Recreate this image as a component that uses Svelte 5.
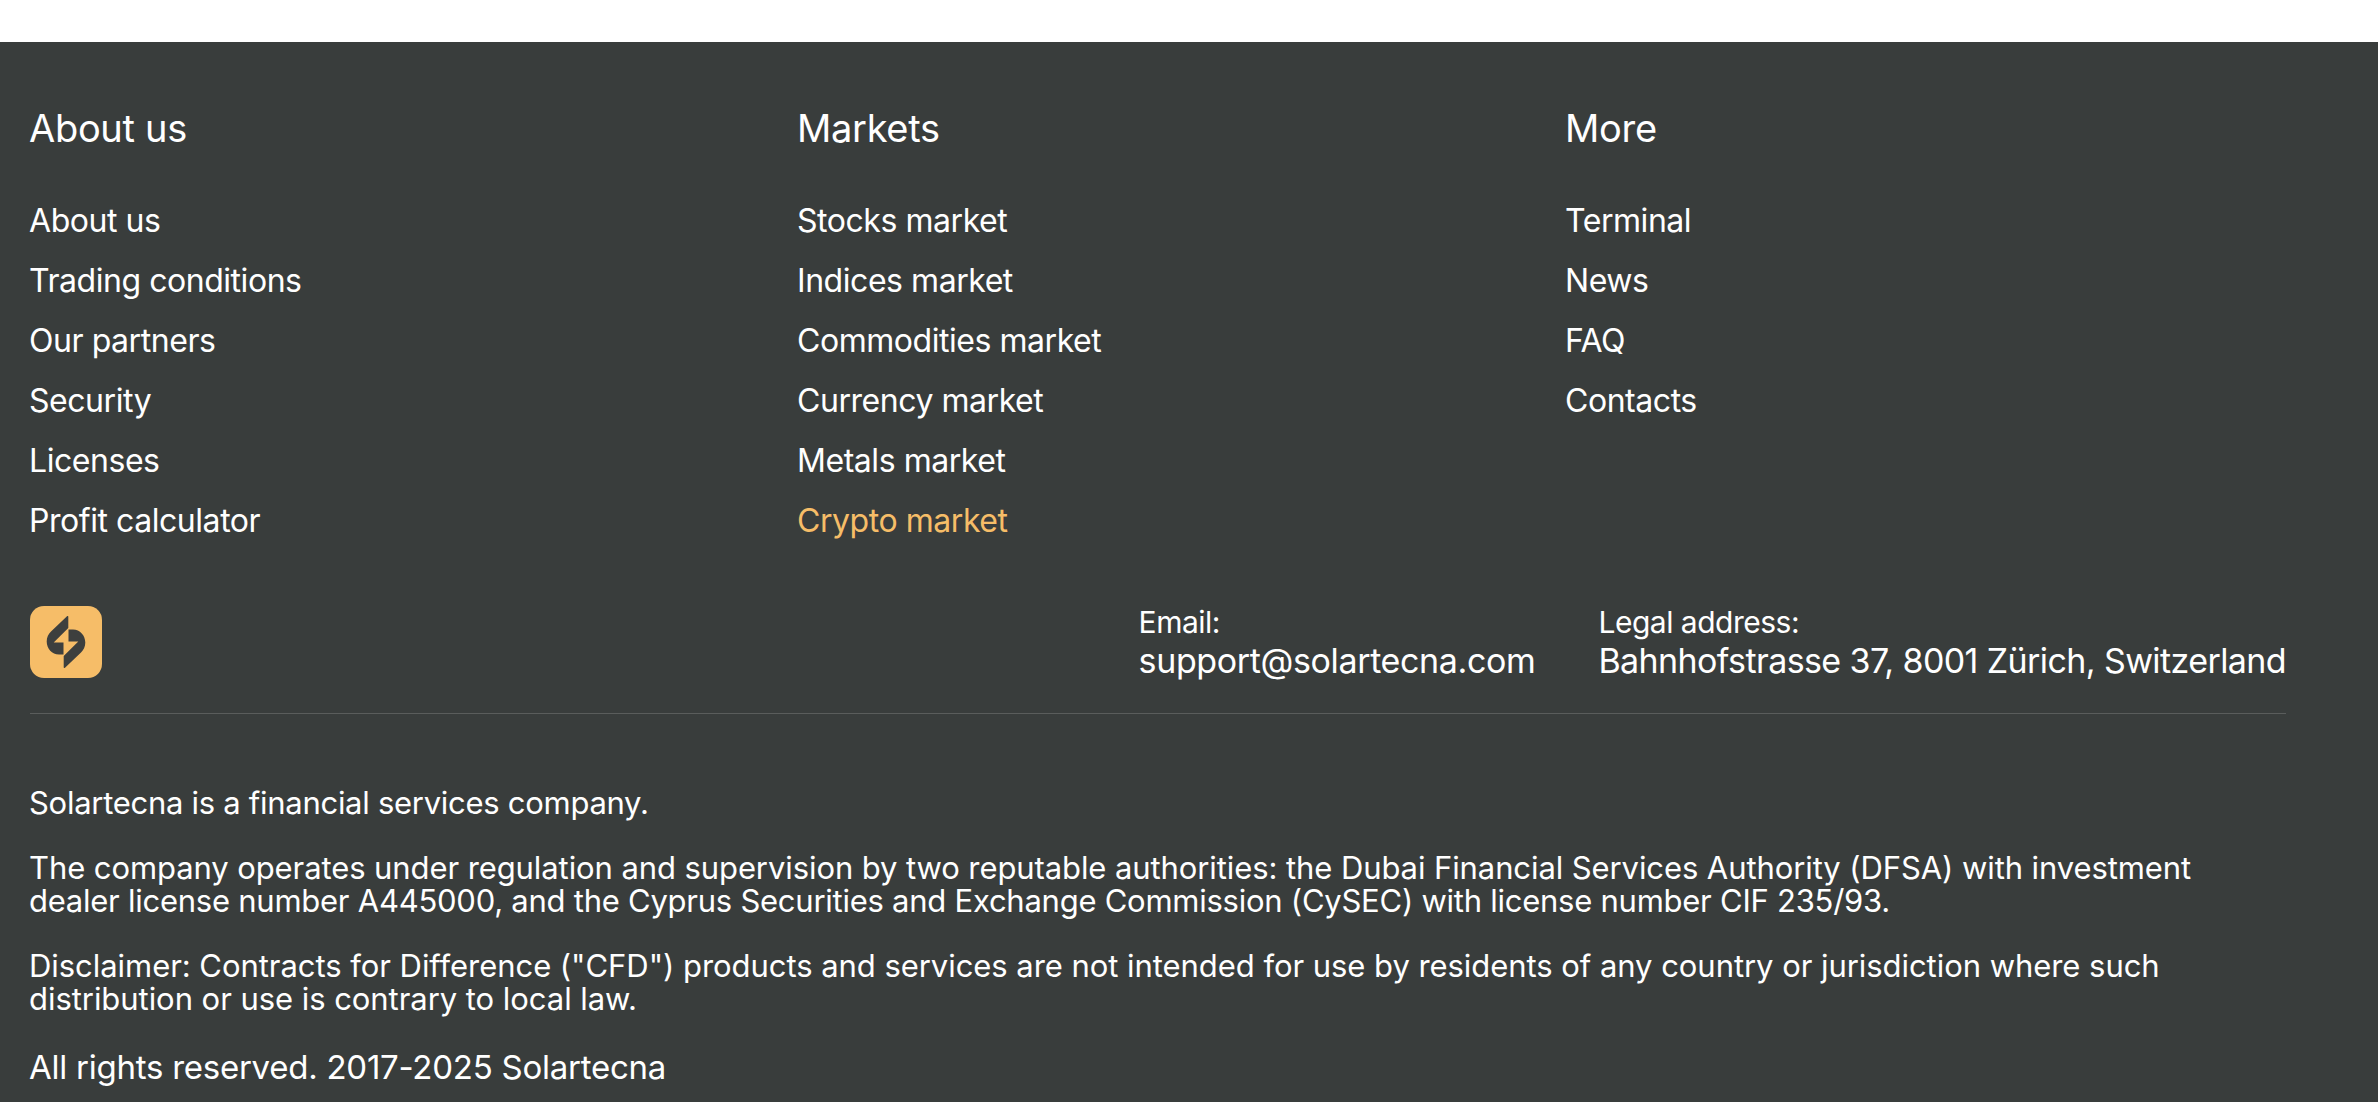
<script>
  const columns = [
    { title: 'About us', links: ['About us', 'Trading conditions', 'Our partners', 'Security', 'Licenses', 'Profit calculator'] },
    { title: 'Markets', links: ['Stocks market', 'Indices market', 'Commodities market', 'Currency market', 'Metals market', 'Crypto market'] },
    { title: 'More', links: ['Terminal', 'News', 'FAQ', 'Contacts'] }
  ];
</script>

<footer class="footer">
  <div class="inner">
    <nav class="columns">
      {#each columns as col}
        <div class="col">
          <h3>{col.title}</h3>
          <ul>
            {#each col.links as link}
              <li><a href="#top" class:active={link === 'Crypto market'}>{link}</a></li>
            {/each}
          </ul>
        </div>
      {/each}
    </nav>

    <div class="contact">
      <div class="logo">
        <svg viewBox="0 0 72 72" width="72" height="72">
          <path fill="#3d3f3e" d="M38.3 10.5 V22 L23.7 36.5 H33.5 V48.5 H29 C22 48.5 16.7 42.5 16.7 35.5 C16.7 31 18.5 28 21 25.5 L37 10.3 C37.6 9.8 38.3 10 38.3 10.5 Z" />
          <path fill="#3d3f3e" transform="rotate(180 36 36)" d="M38.3 10.5 V22 L23.7 36.5 H33.5 V48.5 H29 C22 48.5 16.7 42.5 16.7 35.5 C16.7 31 18.5 28 21 25.5 L37 10.3 C37.6 9.8 38.3 10 38.3 10.5 Z" />
        </svg>
      </div>
      <div class="contact-items">
        <div class="item">
          <span>Email:</span>
          <strong>support@solartecna.com</strong>
        </div>
        <div class="item">
          <span>Legal address:</span>
          <strong class="address">Bahnhofstrasse 37, 8001 Zürich, Switzerland</strong>
        </div>
      </div>
    </div>

    <div class="legal">
      <p class="intro">Solartecna is a financial services company.</p>
      <p>The company operates under regulation and supervision by two reputable authorities: the Dubai Financial Services Authority (DFSA) with investment <span class="tight">dealer license number A445000, and the Cyprus Securities and Exchange Commission (CySEC) with license number CIF 235/93.</span></p>
      <p class="disclaimer">Disclaimer: Contracts for Difference ("CFD") products and services are not intended for use by residents of any country or jurisdiction where such distribution or use is contrary to local law.</p>
    </div>
    <div class="copy">All rights reserved. 2017-2025 Solartecna</div>
  </div>
</footer>

<style>
  :global(body) {
    margin: 0;
    background: #fff;
  }

  .footer {
    margin-top: 42px;
    height: 1060px;
    box-sizing: border-box;
    background: #393d3c;
    color: #fff;
    font-family: Inter, "Noto Sans", sans-serif;
    overflow: hidden;
  }

  .inner {
    width: 2256px;
    margin-left: 30px;
    padding-top: 62px;
  }

  .columns {
    display: grid;
    grid-template-columns: repeat(3, 720px);
    gap: 48px;
    margin-left: -1px;
  }

  h3 {
    margin: 0 0 39px;
    font-size: 38px;
    line-height: 48px;
    font-weight: 400;
    letter-spacing: -0.3px;
  }

  ul {
    list-style: none;
    margin: 0;
    padding: 0;
  }

  li {
    height: 60px;
    font-size: 32px;
    line-height: 60px;
    letter-spacing: -0.45px;
  }

  a {
    color: #fff;
    text-decoration: none;
  }

  a.active {
    color: #f6bd68;
  }

  .contact {
    display: flex;
    justify-content: space-between;
    align-items: flex-start;
    height: 107px;
    margin-top: 55px;
    border-bottom: 1px solid #5a5d5c;
  }

  .logo {
    width: 72px;
    height: 72px;
    border-radius: 14px;
    background: #f6bd68;
  }

  .contact-items {
    display: flex;
    gap: 63px;
    margin-top: -2px;
  }

  .item {
    display: flex;
    flex-direction: column;
  }

  .item span {
    font-size: 30px;
    line-height: 36px;
    letter-spacing: -0.5px;
  }

  .item strong {
    font-size: 34px;
    line-height: 42px;
    font-weight: 400;
    letter-spacing: -0.37px;
  }

  .item .address {
    letter-spacing: -0.6px;
  }

  .legal {
    margin-top: 72px;
    margin-left: -1px;
    font-size: 31px;
    line-height: 33px;
    letter-spacing: -0.09px;
  }

  .legal p {
    margin: 0 0 32px;
  }

  .legal .intro {
    letter-spacing: -0.28px;
  }

  .legal .tight {
    letter-spacing: -0.25px;
  }

  .legal .disclaimer {
    letter-spacing: -0.05px;
  }

  .copy {
    margin-left: -1px;
    font-size: 33px;
    line-height: 40px;
    letter-spacing: -0.25px;
  }
</style>
